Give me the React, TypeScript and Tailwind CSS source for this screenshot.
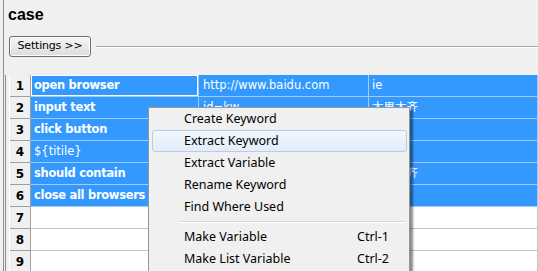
const cellFont = { fontFamily: '"DejaVu Sans", "Noto Sans CJK SC", sans-serif' };

type Row = { n: number; k?: string; a?: string; b?: string; bold?: boolean };

const rows: Row[] = [
  { n: 1, k: "open browser", a: "http://www.baidu.com", b: "ie", bold: true },
  { n: 2, k: "input text", a: "id=kw", b: "大男大齐", bold: true },
  { n: 3, k: "click button", bold: true },
  { n: 4, k: "${titile}" },
  { n: 5, k: "should contain", b: "大男大齐", bold: true },
  { n: 6, k: "close all browsers", bold: true },
  { n: 7 },
  { n: 8 },
  { n: 9 },
];

const menu: (string | [string, string] | null)[] = [
  "Create Keyword",
  "Extract Keyword",
  "Extract Variable",
  "Rename Keyword",
  "Find Where Used",
  null,
  ["Make Variable", "Ctrl-1"],
  ["Make List Variable", "Ctrl-2"],
];

const GridRow = ({ row }: { row: Row }) => {
  const sel = row.n <= 6;
  const cell = sel
    ? "bg-[#3399ff] text-white border-b border-r border-[#a3cbf3]"
    : "bg-white border-b border-r border-[#c4c4c4]";
  return (
    <div className="flex h-[22px]">
      <div className="w-[21px] flex items-center justify-center bg-[#f0f0f0] border-b border-r border-[#a0a0a0] text-[12px] font-bold text-black">
        {row.n}
      </div>
      <div
        className={`w-[168px] flex items-center pl-[3px] whitespace-nowrap overflow-hidden ${cell} ${
          row.bold ? "font-bold text-[11.5px] tracking-[-0.3px]" : "text-[11.5px]"
        } ${row.n === 1 ? "shadow-[inset_0_0_0_1px_#ffffff]" : ""}`}
      >
        {row.k}
      </div>
      <div className={`w-[170px] flex items-center pl-[4px] text-[11.5px] whitespace-nowrap overflow-hidden ${cell}`}>
        {row.a}
      </div>
      <div className={`flex-1 flex items-center pl-[3px] text-[11.5px] whitespace-nowrap ${cell}`}>
        {row.b}
      </div>
    </div>
  );
};

export default function App() {
  return (
    <div className="relative w-[538px] h-[271px] overflow-hidden bg-[#f0f0f0] pl-[3px]" style={cellFont}>
      <div className="h-full border-l border-[#8c8c8c] flex flex-col">
        <div
          className="pl-[4px] pt-[7px] text-[16px] leading-none font-bold text-black"
          style={{ fontFamily: '"Liberation Sans", Arial, sans-serif' }}
        >
          case
        </div>
        <div className="flex items-center mt-[13px] pl-[5px]">
          <button className="w-[82px] h-[21px] rounded-[3px] border border-[#707070] bg-gradient-to-b from-[#f6f6f6] to-[#dcdcdc] text-[11px] tracking-[-0.2px] text-black shadow-[inset_0_0_0_1px_#fcfcfc]">
            Settings &gt;&gt;
          </button>
          <div className="flex-1 ml-[5px] h-[2px] border-t border-[#a8a8a8] border-b border-b-white" />
        </div>
        <div className="mt-[18px] ml-[1px] border-l border-[#8c8c8c] pl-[3px] flex-1">
          <div className="border-l border-white">
            {rows.map((r) => (
              <GridRow key={r.n} row={r} />
            ))}
          </div>
        </div>
      </div>

      <div
        className="absolute left-[148px] top-[107px] w-[262px] h-[190px] bg-[#f0f0f0] border border-[#979797] shadow-[3px_3px_2px_rgba(0,0,0,0.45)] text-[12.5px] text-black"
        style={{ fontFamily: '"Noto Sans", "Open Sans", sans-serif' }}
      >
        {menu.map((m, i) =>
          m === null ? (
            <div key={i} className="h-[8px] flex flex-col justify-center ml-[31px] mr-[3px]">
              <div className="h-px bg-[#d7d7d7]" />
              <div className="h-px bg-white" />
            </div>
          ) : (
            <div
              key={i}
              className={`h-[22px] ml-[3px] mr-[2px] flex items-center pl-[31px] rounded-[3px] border ${
                i === 1
                  ? "border-[#b3cdef] bg-gradient-to-b from-[#f3f7fd] to-[#e2ecf9]"
                  : "border-transparent"
              }`}
            >
              <span className="flex-1 whitespace-nowrap">{typeof m === "string" ? m : m[0]}</span>
              {typeof m !== "string" && <span className="w-[49px] whitespace-nowrap">{m[1]}</span>}
            </div>
          )
        )}
      </div>
    </div>
  );
}
